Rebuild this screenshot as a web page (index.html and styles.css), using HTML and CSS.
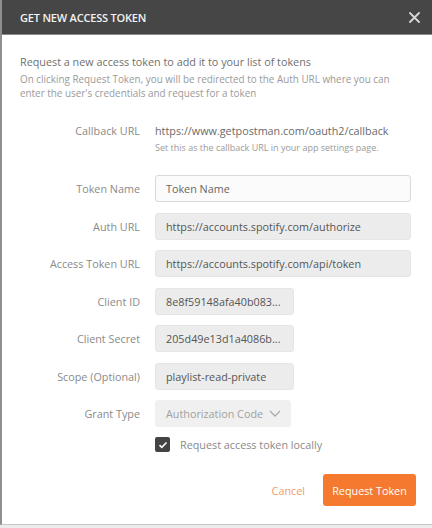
FILE: index.html
```html
<!DOCTYPE html>
<html>
<head>
<meta charset="utf-8">
<link rel="stylesheet" href="styles.css">
</head>
<body>
<div class="modal">
  <div class="header">
    <span class="title">GET NEW ACCESS TOKEN</span>
    <svg class="close" width="11" height="11" viewBox="0 0 11 11"><path d="M1 1L10 10M10 1L1 10" stroke="#d8d8d8" stroke-width="1.8" stroke-linecap="round"/></svg>
  </div>
  <div class="body">
    <p class="intro">Request a new access token to add it to your list of tokens</p>
    <p class="intro-sub">On clicking Request Token, you will be redirected to the Auth URL where you can enter the user's credentials and request for a token</p>

    <div class="row callback">
      <div class="label">Callback URL</div>
      <div class="field">
        <div class="value">https://www.getpostman.com/oauth2/callback</div>
        <div class="help">Set this as the callback URL in your app settings page.</div>
      </div>
    </div>

    <div class="row">
      <div class="label">Token Name</div>
      <div class="field"><div class="input editable wide">Token Name</div></div>
    </div>
    <div class="row">
      <div class="label">Auth URL</div>
      <div class="field"><div class="input disabled wide">https://accounts.spotify.com/authorize</div></div>
    </div>
    <div class="row">
      <div class="label">Access Token URL</div>
      <div class="field"><div class="input disabled wide">https://accounts.spotify.com/api/token</div></div>
    </div>
    <div class="row">
      <div class="label">Client ID</div>
      <div class="field"><div class="input disabled short">8e8f59148afa40b083...</div></div>
    </div>
    <div class="row">
      <div class="label">Client Secret</div>
      <div class="field"><div class="input disabled short">205d49e13d1a4086b...</div></div>
    </div>
    <div class="row">
      <div class="label">Scope (Optional)</div>
      <div class="field"><div class="input disabled short">playlist-read-private</div></div>
    </div>
    <div class="row">
      <div class="label">Grant Type</div>
      <div class="field"><div class="input select">Authorization Code
        <svg class="chev" width="12" height="7" viewBox="0 0 12 7"><path d="M1 1L6 6L11 1" fill="none" stroke="#aaa" stroke-width="1.3"/></svg></div></div>
    </div>
    <div class="row check-row">
      <div class="label"></div>
      <div class="field check-field">
        <span class="checkbox"><svg width="10" height="8" viewBox="0 0 10 8"><path d="M1.5 4.2L3.8 6.3L8.5 1.5" fill="none" stroke="#fff" stroke-width="1.6"/></svg></span>
        <span class="check-label">Request access token locally</span>
      </div>
    </div>

    <div class="actions">
      <span class="cancel">Cancel</span>
      <span class="btn">Request Token</span>
    </div>
  </div>
</div>
</body>
</html>
```

FILE: styles.css
```css
html, body {
  margin: 0;
  padding: 0;
  background: #ececec;
}
body {
  width: 432px;
  height: 528px;
  overflow: hidden;
  font-family: "Open Sans", "Liberation Sans", sans-serif;
}
.modal {
  width: 430px;
  height: 524px;
  border-left: 2px solid #8f8f8f;
  border-bottom: 1px solid #c8c8c8;
  background: #fff;
  display: flex;
  flex-direction: column;
}
.header {
  height: 34px;
  background: #464646;
  border-bottom: 1px solid #8a8a8a;
  display: flex;
  align-items: center;
  justify-content: space-between;
  padding: 0 12px 0 18px;
  flex-shrink: 0;
}
.title {
  color: #f2f2f2;
  font-size: 11px;
  font-weight: 600;
  letter-spacing: -0.2px;
  padding-top: 1px;
}
.close {
  display: block;
}
.body {
  padding: 20px 16px 0 18px;
  flex: 1;
}
.intro {
  margin: 0;
  font-size: 10.8px;
  line-height: 14px;
  color: #707070;
}
.intro-sub {
  margin: 3px 0 0;
  font-size: 9.9px;
  line-height: 14px;
  color: #9a9a9a;
}
.row {
  display: flex;
  align-items: center;
  margin-top: 10.5px;
}
.label {
  width: 120px;
  flex-shrink: 0;
  text-align: right;
  padding-right: 15px;
  font-size: 10.8px;
  color: #8a8a8a;
}
.field {
  flex: 1;
  display: flex;
  flex-direction: column;
}
.callback {
  margin-top: 22.5px;
  align-items: flex-start;
}
.callback .label {
  line-height: 15px;
}
.value {
  font-size: 10.8px;
  line-height: 15px;
  color: #6a6a6a;
}
.help {
  margin-top: 4.5px;
  font-size: 9px;
  line-height: 12px;
  color: #9a9a9a;
}
.callback + .row {
  margin-top: 21px;
}
.input {
  box-sizing: border-box;
  height: 27px;
  border-radius: 3px;
  padding: 0 10px;
  display: flex;
  align-items: center;
  font-size: 10.8px;
  color: #555;
  white-space: nowrap;
}
.wide {
  width: 256px;
}
.short {
  width: 139px;
}
.editable {
  background: #fbfbfb;
  border: 1px solid #dadada;
  color: #666;
}
.disabled {
  background: #ececec;
  border: 1px solid #e6e6e6;
}
.select {
  width: 136px;
  background: #f0f0f0;
  border: 1px solid #f0f0f0;
  color: #a0a0a0;
  justify-content: space-between;
  padding-right: 9px;
}
.chev {
  display: block;
}
.check-row {
  margin-top: 10px;
}
.check-field {
  flex-direction: row;
  align-items: center;
}
.checkbox {
  width: 15px;
  height: 15px;
  border-radius: 2px;
  background: #444;
  display: flex;
  align-items: center;
  justify-content: center;
  margin-right: 10px;
}
.checkbox svg {
  display: block;
}
.check-label {
  font-size: 10.8px;
  color: #8a8a8a;
}
.actions {
  display: flex;
  justify-content: flex-end;
  align-items: center;
  margin-top: 22px;
}
.cancel {
  font-size: 10.8px;
  color: #f39a6c;
  margin-right: 18px;
}
.btn {
  width: 93px;
  height: 32px;
  border-radius: 3px;
  background: #f5792f;
  color: #fff;
  font-size: 10.8px;
  display: flex;
  align-items: center;
  justify-content: center;
}
```
